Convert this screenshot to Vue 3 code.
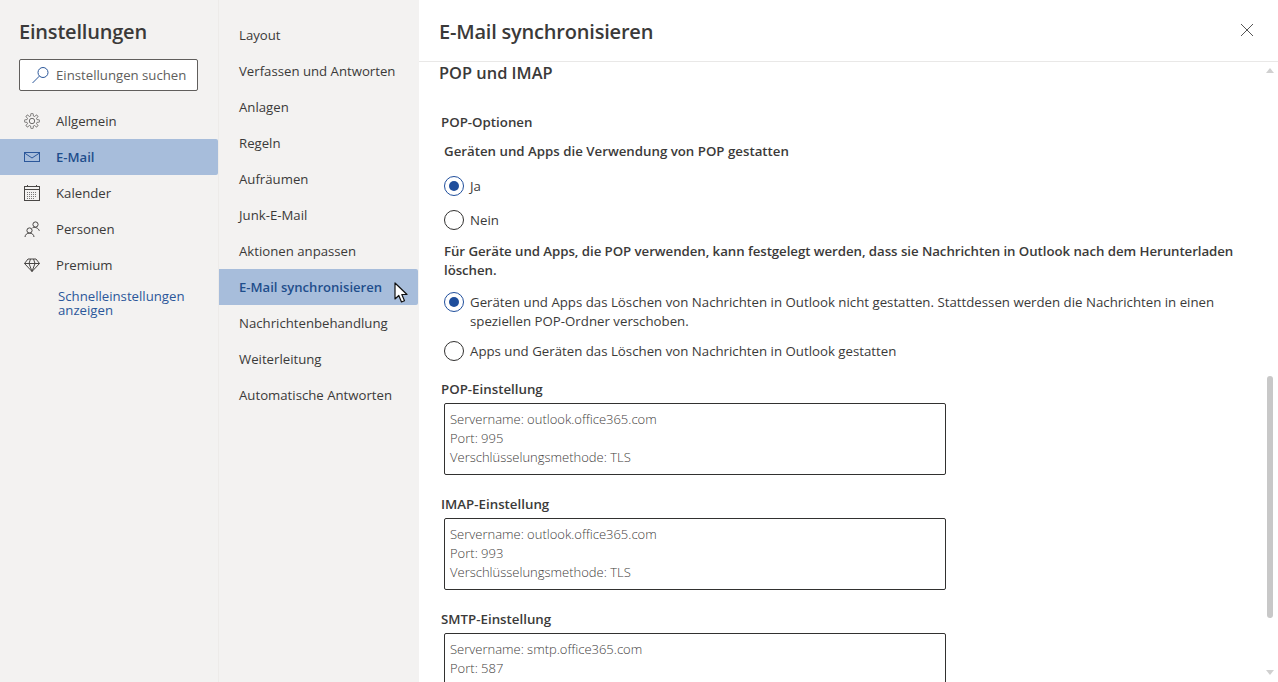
<script setup>
const nav = [
  { id: 'gear', label: 'Allgemein' },
  { id: 'mail', label: 'E-Mail', active: true },
  { id: 'cal', label: 'Kalender' },
  { id: 'people', label: 'Personen' },
  { id: 'gem', label: 'Premium' },
]
const sub = ['Layout', 'Verfassen und Antworten', 'Anlagen', 'Regeln', 'Aufräumen', 'Junk-E-Mail', 'Aktionen anpassen', 'E-Mail synchronisieren', 'Nachrichtenbehandlung', 'Weiterleitung', 'Automatische Antworten']
const boxes = [
  { title: 'POP-Einstellung', lines: ['Servername: outlook.office365.com', 'Port: 995', 'Verschlüsselungsmethode: TLS'] },
  { title: 'IMAP-Einstellung', lines: ['Servername: outlook.office365.com', 'Port: 993', 'Verschlüsselungsmethode: TLS'] },
  { title: 'SMTP-Einstellung', lines: ['Servername: smtp.office365.com', 'Port: 587'] },
]
const gearPath = (() => {
  const pts = []
  for (let i = 0; i < 160; i++) {
    const a = (i / 160) * Math.PI * 2
    const c = Math.cos(a * 8)
    const r = 6.4 + 1.3 * Math.max(-1, Math.min(1, c * 1.6))
    pts.push(`${(8 + r * Math.cos(a)).toFixed(2)} ${(8 + r * Math.sin(a)).toFixed(2)}`)
  }
  return 'M' + pts.join('L') + 'Z'
})()
</script>

<template>
  <div class="app">
    <aside class="side">
      <h1 class="title">Einstellungen</h1>
      <div class="search">
        <svg class="search-icon" width="17" height="18" viewBox="0 0 17 18" fill="none" stroke="#2b579a" stroke-width="1">
          <circle cx="11" cy="6.500" r="5" />
          <path d="M7.400 10.100 L0.500 17" />
        </svg>
        <span>Einstellungen suchen</span>
      </div>
      <nav class="nav">
        <div v-for="n in nav" :key="n.id" class="nav-item" :class="{ active: n.active }">
          <span class="nav-icon">
            <svg v-if="n.id === 'gear'" width="16" height="16" viewBox="0 0 16 16" fill="none" stroke="#605e5c" stroke-width="0.900">
              <circle cx="8" cy="8" r="2.700" />
              <path :d="gearPath" />
            </svg>
            <svg v-else-if="n.id === 'mail'" width="16" height="16" viewBox="0 0 16 16" fill="none" stroke="#2b579a" stroke-width="1">
              <rect x="0.500" y="3.500" width="15" height="9" />
              <path d="M0.500 4 L8 9 L15.500 4" />
            </svg>
            <svg v-else-if="n.id === 'cal'" width="16" height="16" viewBox="0 0 16 16" fill="none" stroke="#484644" stroke-width="1">
              <rect x="0.500" y="1.500" width="15" height="14" />
              <path d="M0.500 4.500h15" />
              <path d="M3.500 0v2M12.500 0v2" />
              <path d="M3 7.500h10M3 9.500h10M3 11.500h10M3 13.500h7" stroke-dasharray="1 1" stroke="#777" />
            </svg>
            <svg v-else-if="n.id === 'people'" width="16" height="16" viewBox="0 0 16 16" fill="none" stroke="#484644" stroke-width="1">
              <circle cx="5.500" cy="9.500" r="2.600" />
              <path d="M1 16c.2-2.400 2-3.900 4.500-3.900S9.800 13.600 10 16" />
              <circle cx="11.500" cy="3.500" r="2.600" />
              <path d="M8.500 6.800c3-1.100 6 .4 6.800 3" />
            </svg>
            <svg v-else width="16" height="16" viewBox="0 0 16 16" fill="none" stroke="#484644" stroke-width="1">
              <path d="M4 2h8l3.500 4.500L8 14.500 .5 6.500z" />
              <path d="M.5 6.500h15M5 6.500 8 14.500 11 6.500M5 6.500 6.500 2M11 6.500 9.500 2" />
            </svg>
          </span>
          <span>{{ n.label }}</span>
        </div>
      </nav>
      <div class="quick">Schnelleinstellungen anzeigen</div>
    </aside>

    <section class="subnav">
      <div v-for="s in sub" :key="s" class="sub-item" :class="{ active: s === 'E-Mail synchronisieren' }">
        {{ s }}
        <svg v-if="s === 'E-Mail synchronisieren'" class="cursor" width="16" height="22" viewBox="0 0 16 22">
          <path d="M1 1 V17 L4.800 13.500 L7.500 20 L10.500 18.700 L7.800 12.500 H13 Z" fill="#fff" stroke="#111" stroke-width="1.200" stroke-linejoin="round" />
        </svg>
      </div>
    </section>

    <main class="main">
      <header class="head">
        <h2>E-Mail synchronisieren</h2>
        <svg class="close" width="14" height="14" viewBox="0 0 14 14" stroke="#555" stroke-width="1" fill="none">
          <path d="M1 1 L13 13 M13 1 L1 13" />
        </svg>
      </header>
      <div class="scroll">
        <div class="track">
          <span class="arrow up"></span>
          <span class="thumb"></span>
          <span class="arrow down"></span>
        </div>
        <h3 class="section">POP und IMAP</h3>
        <div class="label first">POP-Optionen</div>
        <div class="q">Geräten und Apps die Verwendung von POP gestatten</div>
        <div class="radio r1"><span class="dot on"></span><span>Ja</span></div>
        <div class="radio r2"><span class="dot"></span><span>Nein</span></div>
        <div class="q q2">Für Geräte und Apps, die POP verwenden, kann festgelegt werden, dass sie Nachrichten in Outlook nach dem Herunterladen löschen.</div>
        <div class="radio r3"><span class="dot on"></span><span>Geräten und Apps das Löschen von Nachrichten in Outlook nicht gestatten. Stattdessen werden die Nachrichten in einen speziellen POP-Ordner verschoben.</span></div>
        <div class="radio r4"><span class="dot"></span><span>Apps und Geräten das Löschen von Nachrichten in Outlook gestatten</span></div>
        <div class="blocks">
          <div v-for="b in boxes" :key="b.title" class="block">
            <div class="label">{{ b.title }}</div>
            <div class="box">
              <div v-for="l in b.lines" :key="l">{{ l }}</div>
            </div>
          </div>
        </div>
      </div>
    </main>
  </div>
</template>

<style>
html, body { margin: 0; height: 100%; overflow: hidden; background: #fff; }
</style>

<style scoped>
.app {
  display: flex;
  width: 1278px;
  height: 682px;
  overflow: hidden;
  font-family: "Open Sans", "Noto Sans", sans-serif;
  font-size: 13.200px;
  color: #3b3a39;
}
.side {
  flex: none;
  background: #f3f2f1;
  box-sizing: border-box;
  border-right: 1px solid #edebe9;
  width: 219px;
}
.title {
  margin: 0;
  padding: 17px 0 0 19px;
  height: 42px;
  box-sizing: border-box;
  font-size: 20px;
  line-height: 30px;
  font-weight: 600;
  letter-spacing: -0.200px;
}
.search {
  margin: 17px 0 0 19px;
  width: 179px;
  height: 32px;
  box-sizing: border-box;
  border: 1px solid #605e5c;
  border-radius: 2px;
  background: #fff;
  display: flex;
  align-items: center;
  padding-left: 12px;
  gap: 7px;
  color: #605e5c;
  white-space: nowrap;
}
.nav { margin-top: 12px; }
.nav-item {
  height: 36px;
  width: 218px;
  display: flex;
  align-items: center;
  box-sizing: border-box;
  padding-left: 24px;
  gap: 16px;
}
.nav-item.active {
  background: #a7bddb;
  color: #1f4e8c;
  font-weight: 600;
  font-size: 13.100px;
  border-radius: 0 2px 2px 0;
}
.nav-icon { width: 16px; height: 16px; display: flex; }
.quick {
  margin: 6px 0 0 58px;
  width: 140px;
  line-height: 14px;
  color: #2b579a;
}
.subnav {
  width: 200px;
  flex: none;
  background: #f3f2f1;
  padding-top: 17px;
}
.sub-item {
  height: 36px;
  line-height: 36px;
  padding-left: 20px;
  width: 199px;
  box-sizing: border-box;
  white-space: nowrap;
  position: relative;
}
.sub-item.active {
  background: #a7bddb;
  color: #1f4e8c;
  font-weight: 600;
  font-size: 13.100px;
  border-radius: 0 2px 2px 0;
}
.cursor { position: absolute; left: 175px; top: 13px; }
.main {
  flex: 1;
  min-width: 0;
  display: flex;
  flex-direction: column;
  background: #fff;
}
.head {
  height: 62px;
  flex: none;
  box-sizing: border-box;
  border-bottom: 1px solid #e9e8e7;
  display: flex;
  align-items: center;
  justify-content: space-between;
  padding: 0 24px 2px 20px;
}
.head h2 {
  margin: 4px 0 0;
  font-size: 20px;
  font-weight: 600;
  letter-spacing: -0.200px;
}
.scroll {
  position: relative;
  flex: 1;
  min-height: 0;
  overflow: hidden;
  padding: 0 30px 0 20px;
}
.track {
  position: absolute;
  right: 0;
  top: 0;
  bottom: 0;
  width: 14px;
}
.thumb {
  position: absolute;
  left: 3px;
  top: 314px;
  width: 6px;
  height: 242px;
  background: #c8c8c8;
  border-radius: 3px;
}
.arrow {
  position: absolute;
  left: 2px;
  width: 0;
  height: 0;
  border-left: 4px solid transparent;
  border-right: 4px solid transparent;
}
.arrow.up { top: 6px; border-bottom: 5px solid #d0d0d0; }
.arrow.down { bottom: 7px; border-top: 5px solid #d0d0d0; }
.section {
  margin: 0;
  font-size: 16.400px;
  line-height: 22px;
  font-weight: 600;
}
.label {
  font-weight: 600;
  font-size: 13.300px;
  line-height: 20px;
  padding-left: 2px;
}
.label.first { margin-top: 28px; }
.q {
  font-weight: 600;
  font-size: 13.270px;
  line-height: 19px;
  padding-left: 5px;
  margin-top: 10px;
}
.q2 { margin-top: 12px; letter-spacing: -0.060px; }
.radio {
  display: flex;
  align-items: flex-start;
  gap: 6px;
  padding-left: 5px;
  line-height: 19px;
  font-size: 13.260px;
}
.dot {
  flex: none;
  width: 20px;
  height: 20px;
  margin-top: -1px;
  box-sizing: border-box;
  border: 1px solid #323130;
  border-radius: 50%;
  background: #fff;
  position: relative;
}
.dot.on { border-color: #1f4e9c; }
.dot.on::after {
  content: "";
  position: absolute;
  left: 4px;
  top: 4px;
  width: 10px;
  height: 10px;
  border-radius: 50%;
  background: #1f4e9c;
}
.r1 { margin-top: 16px; }
.r2 { margin-top: 15px; }
.r3 { margin-top: 13px; }
.r4 { margin-top: 11px; }
.blocks {
  display: flex;
  flex-direction: column;
  gap: 19px;
  margin-top: 18px;
}
.box {
  margin: 4px 0 0 5px;
  width: 502px;
  height: 72px;
  box-sizing: border-box;
  border: 1px solid #323130;
  border-radius: 2px;
  padding: 6px 5px;
  font-size: 13px;
  line-height: 19px;
  color: #3f3e3d;
  font-weight: 300;
}
</style>
